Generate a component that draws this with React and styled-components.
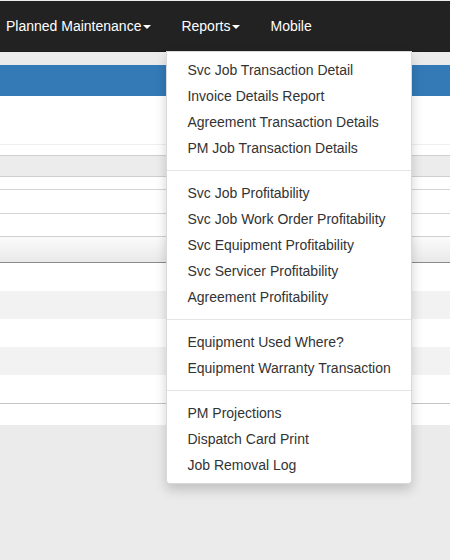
import React from 'react';
import styled, { createGlobalStyle } from 'styled-components';

const GlobalStyle = createGlobalStyle`
  html, body {
    margin: 0;
    padding: 0;
    background: #ebebeb;
    font-family: "Liberation Sans", Arial, sans-serif;
    font-size: 14px;
    color: #333;
    overflow: hidden;
  }
`;

const Page = styled.div`
  width: 450px;
  height: 560px;
  padding-top: 1px;
  box-sizing: border-box;
  overflow: hidden;
`;

// Navbar
const Navbar = styled.nav`
  position: relative;
  z-index: 10;
  height: 50px;
  background: #222;
  border-bottom: 1px solid #1c1c1c;
`;

const NavList = styled.ul`
  display: flex;
  list-style: none;
  margin: 0 0 0 -9px;
  padding: 0;
  height: 50px;
`;

const NavItem = styled.li`
  position: relative;
`;

const NavLink = styled.a`
  display: block;
  padding: 15px;
  line-height: 20px;
  color: #fff;
  text-decoration: none;
  white-space: nowrap;
`;

const Caret = styled.span`
  display: inline-block;
  width: 0;
  height: 0;
  margin-left: 2px;
  vertical-align: middle;
  border-top: 4px solid;
  border-right: 4px solid transparent;
  border-left: 4px solid transparent;
`;

const DropdownMenu = styled.ul`
  position: absolute;
  top: 100%;
  left: 0;
  z-index: 1000;
  min-width: 160px;
  margin: 0;
  padding: 5px 0;
  list-style: none;
  background: #fff;
  border: 1px solid rgba(0, 0, 0, 0.15);
  border-radius: 0 0 4px 4px;
  box-shadow: 0 6px 12px rgba(0, 0, 0, 0.175);
  white-space: nowrap;
`;

const MenuLink = styled.a`
  display: block;
  padding: 3px 20px;
  line-height: 20px;
  color: #333;
  text-decoration: none;
`;

const Divider = styled.li`
  height: 1px;
  margin: 9px 0;
  overflow: hidden;
  background: #e5e5e5;
`;

// Content behind the menu
const Content = styled.div`
  padding-top: 13px;
`;

const PanelHeading = styled.div`
  height: 31px;
  background: #337ab7;
`;

const PanelBody = styled.div`
  height: 48px;
  background: #fff;
  border-bottom: 1px solid #eee;
`;

const TableRow = styled.div`
  height: ${p => p.$h}px;
  background: ${p => p.$bg || '#fff'};
  border-bottom: ${p => (p.$line ? `1px solid ${p.$line}` : 'none')};
`;

const rows = [
  { h: 10, line: '#cfcfcf' },
  { h: 20, bg: '#ececec', line: '#cfcfcf' },
  { h: 12, line: '#d4d4d4' },
  { h: 23, line: '#d4d4d4' },
  { h: 22, line: '#cfcfcf' },
  { h: 25, bg: 'linear-gradient(#fbfbfb, #e9e9e9)', line: '#8a8a8a' },
  { h: 28 },
  { h: 28, bg: '#f2f2f2' },
  { h: 28 },
  { h: 28, bg: '#f2f2f2' },
  { h: 28, line: '#c4c4c4' },
  { h: 21 },
];

const reportGroups = [
  ['Svc Job Transaction Detail', 'Invoice Details Report', 'Agreement Transaction Details', 'PM Job Transaction Details'],
  ['Svc Job Profitability', 'Svc Job Work Order Profitability', 'Svc Equipment Profitability', 'Svc Servicer Profitability', 'Agreement Profitability'],
  ['Equipment Used Where?', 'Equipment Warranty Transaction'],
  ['PM Projections', 'Dispatch Card Print', 'Job Removal Log'],
];

const App = () => {
  return (
    <Page>
      <GlobalStyle />
      <Navbar>
        <NavList>
          <NavItem>
            <NavLink href="#">Planned Maintenance<Caret /></NavLink>
          </NavItem>
          <NavItem>
            <NavLink href="#">Reports<Caret /></NavLink>
            <DropdownMenu>
              {reportGroups.map((group, gi) => (
                <React.Fragment key={gi}>
                  {gi > 0 && <Divider />}
                  {group.map(item => (
                    <li key={item}>
                      <MenuLink href="#">{item}</MenuLink>
                    </li>
                  ))}
                </React.Fragment>
              ))}
            </DropdownMenu>
          </NavItem>
          <NavItem>
            <NavLink href="#">Mobile</NavLink>
          </NavItem>
        </NavList>
      </Navbar>
      <Content>
        <PanelHeading />
        <PanelBody />
        {rows.map((r, i) => (
          <TableRow key={i} $h={r.h} $bg={r.bg} $line={r.line} />
        ))}
      </Content>
    </Page>
  );
};

export default App;
